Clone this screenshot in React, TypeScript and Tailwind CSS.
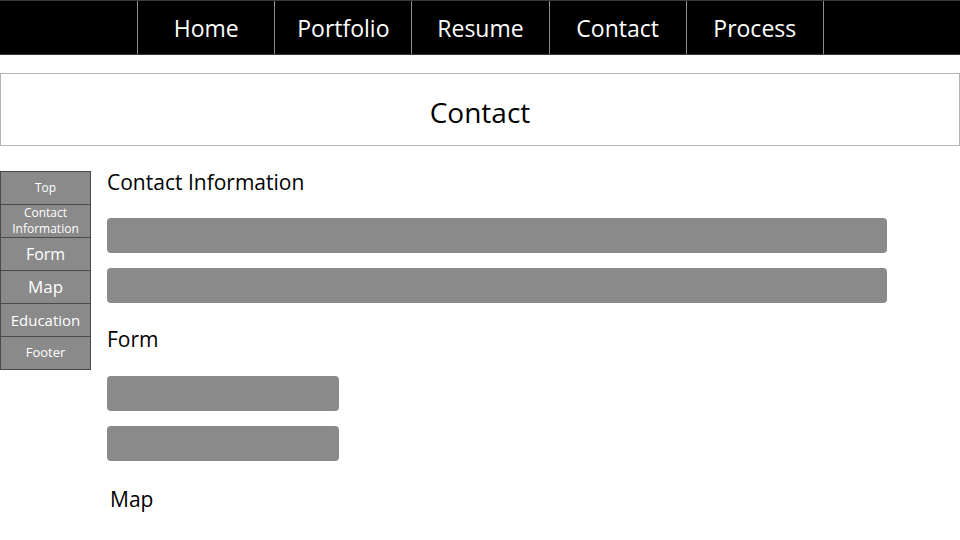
const nav = ['', 'Home', 'Portfolio', 'Resume', 'Contact', 'Process', ''];

const side = [
  { label: 'Top', size: 'text-[12px]' },
  { label: 'Contact Information', size: 'text-[12px] leading-[16px]' },
  { label: 'Form', size: 'text-[16px]' },
  { label: 'Map', size: 'text-[17px]' },
  { label: 'Education', size: 'text-[15px]' },
  { label: 'Footer', size: 'text-[13px]' },
];

function Bar({ wide }: { wide?: boolean }) {
  return (
    <div
      className={`h-[35px] rounded-[4px] bg-[#8a8a8a] ${wide ? 'w-[780px]' : 'w-[232px]'}`}
    />
  );
}

export default function App() {
  return (
    <div className="h-[540px] w-[960px] overflow-hidden bg-white font-['Open_Sans',sans-serif] text-black">
      <nav className="grid h-[55px] grid-cols-7 border-y border-[#3a3a3a] bg-black">
        {nav.map((item, i) => (
          <div
            key={i}
            className={`flex items-center justify-center pt-[2px] text-[23px] text-white ${
              i > 0 ? 'border-l border-[#8c8c8c]' : ''
            }`}
          >
            {item}
          </div>
        ))}
      </nav>

      <header className="mt-[18px] flex h-[73px] items-center justify-center border border-[#b4b4b4]">
        <h1 className="pt-[4px] text-[28px]">Contact</h1>
      </header>

      <div className="mt-[25px] flex items-start">
        <aside className="flex w-[91px] flex-col border-b border-[#4a4a4a]">
          {side.map((s) => (
            <div
              key={s.label}
              className={`flex h-[33px] items-center justify-center border-x border-t border-[#4a4a4a] bg-[#8a8a8a] text-center text-white ${s.size}`}
            >
              {s.label}
            </div>
          ))}
        </aside>

        <main className="ml-[16px] flex flex-col">
          <h2 className="-mt-[4px] text-[21px] leading-[30px]">Contact Information</h2>
          <div className="mt-[21px] flex flex-col gap-[15px]">
            <Bar wide />
            <Bar wide />
          </div>
          <h2 className="mt-[21px] text-[21px] leading-[30px]">Form</h2>
          <div className="mt-[22px] flex flex-col gap-[15px]">
            <Bar />
            <Bar />
          </div>
          <h2 className="mt-[23px] pl-[3px] text-[21px] leading-[30px]">Map</h2>
        </main>
      </div>
    </div>
  );
}
